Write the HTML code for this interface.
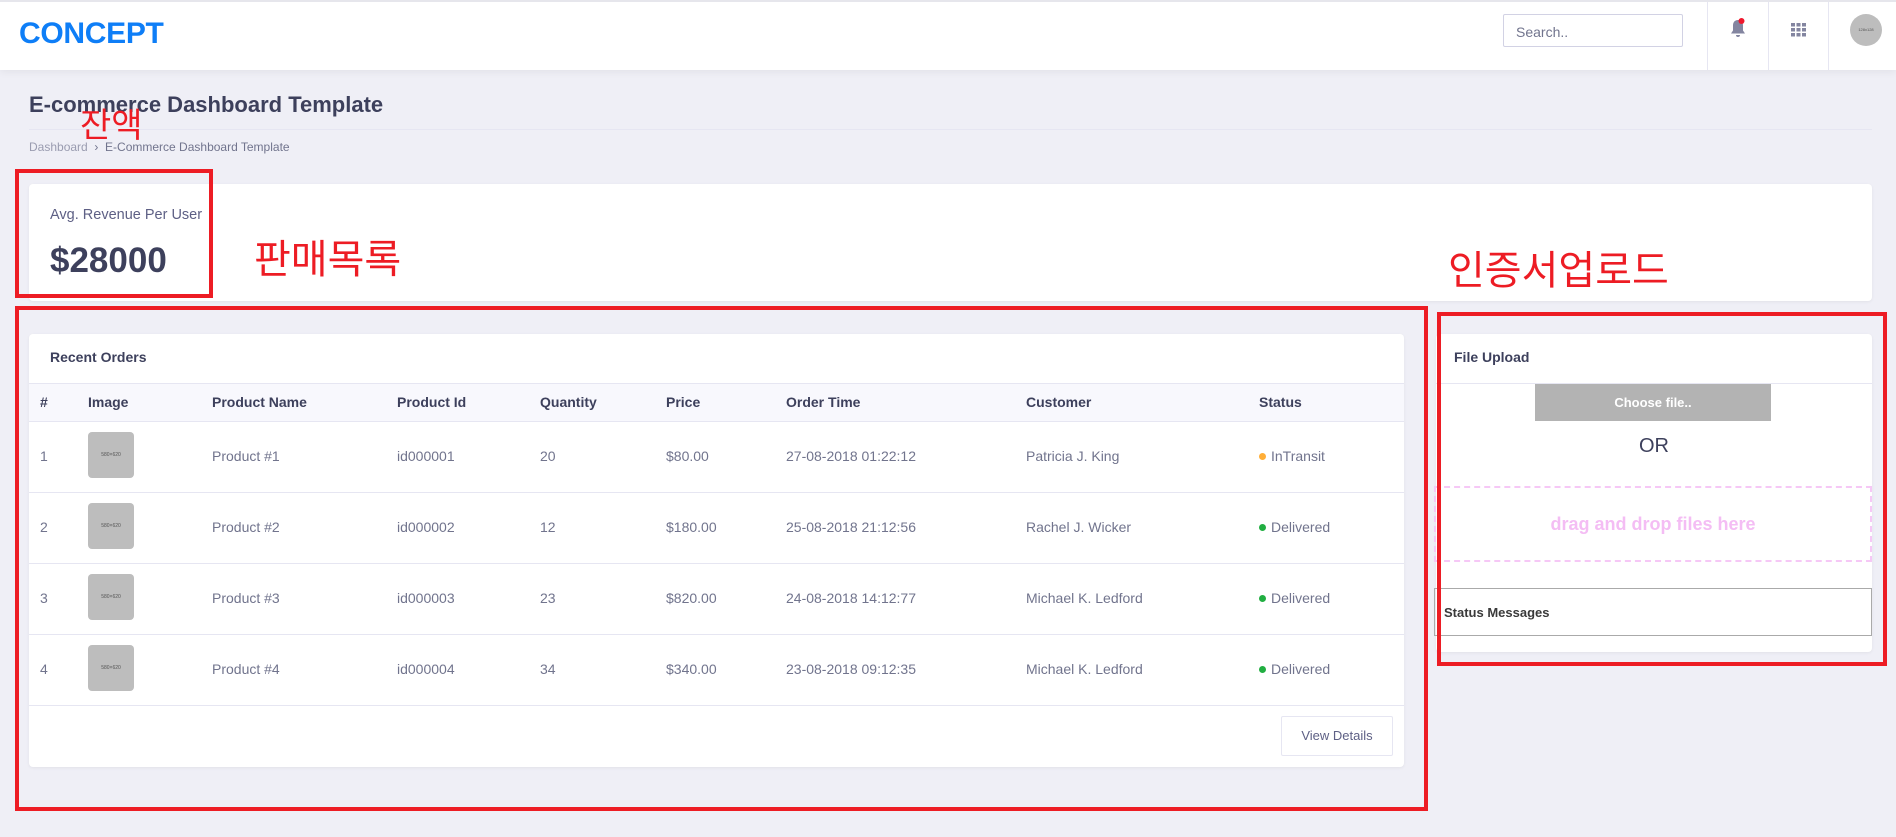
<!DOCTYPE html>
<html><head><meta charset="utf-8">
<style>
*{box-sizing:border-box;margin:0;padding:0}
body{width:1896px;height:837px;background:#efeff6;font-family:"Liberation Sans","Noto Sans CJK KR",sans-serif;position:relative;overflow:hidden;color:#71748d}
.a{position:absolute}
.hdr{left:0;top:0;width:1896px;height:70px;background:#fff;border-top:2px solid #e6e6ec;box-shadow:0 2px 8px rgba(0,0,0,.06)}
.logo{left:19px;top:17px;font-size:30px;font-weight:bold;color:#0e7ef7;letter-spacing:-0.3px}
.search{left:1503px;top:14px;width:180px;height:33px;border:1px solid #d2d2e4;border-radius:2px;font-size:14px;color:#71748d;padding:9px 12px}
.sep{top:2px;width:1px;height:68px;background:#e6e6f2}
.card{background:#fff;border-radius:4px;box-shadow:0 1px 3px rgba(0,0,0,.06)}
.red{border:4px solid #ed1c24}
.kr{color:#ed1c24;font-weight:normal;white-space:nowrap}
.th{font-size:14px;font-weight:bold;color:#3d405c}
.td{font-size:14px;color:#71748d}
.line{height:1px;background:#e6e6f2}
.thumb{width:46px;height:46px;background:#bdbdbd;border-radius:4px;font-size:5px;color:#555;text-align:center;line-height:46px}
.dot{display:inline-block;width:7px;height:7px;border-radius:50%;margin-right:5px;vertical-align:1px}
</style></head><body>
<div class="a hdr"></div>
<div class="a logo">CONCEPT</div>
<div class="a search">Search..</div>
<div class="a sep" style="left:1707px"></div>
<div class="a sep" style="left:1768px"></div>
<div class="a sep" style="left:1828px"></div>
<svg class="a" style="left:1729px;top:18px" width="18" height="22" viewBox="0 0 18 22"><path d="M9 2c-3.5 0-5 2.5-5 5.5v5l-2 3h14l-2-3v-5C14 4.5 12.5 2 9 2z M7 17a2 2 0 0 0 4 0z" fill="#8385a0"/><circle cx="12.5" cy="3" r="3" fill="#ef172c"/></svg>
<svg class="a" style="left:1791px;top:23px" width="15" height="14"><g fill="#8385a0"><rect x="0" y="0" width="4" height="3.5"/><rect x="5.5" y="0" width="4" height="3.5"/><rect x="11" y="0" width="4" height="3.5"/><rect x="0" y="5" width="4" height="3.5"/><rect x="5.5" y="5" width="4" height="3.5"/><rect x="11" y="5" width="4" height="3.5"/><rect x="0" y="10" width="4" height="3.5"/><rect x="5.5" y="10" width="4" height="3.5"/><rect x="11" y="10" width="4" height="3.5"/></g></svg>
<div class="a" style="left:1850px;top:14px;width:32px;height:32px;border-radius:50%;background:#bdbdbd;font-size:4px;color:#555;text-align:center;line-height:32px">128x128</div>

<div class="a" style="left:29px;top:92px;font-size:22px;color:#3d405c;font-weight:bold">E-commerce Dashboard Template</div>
<div class="a line" style="left:29px;top:129px;width:1843px"></div>
<div class="a" style="left:29px;top:140px;font-size:12px;color:#71748d"><span style="color:#9a9cb0">Dashboard</span> &nbsp;›&nbsp; E-Commerce Dashboard Template</div>
<div class="a kr" style="left:80px;top:98px;font-size:34px">잔액</div>

<div class="a card" style="left:29px;top:184px;width:1843px;height:117px"></div>
<div class="a" style="left:50px;top:207px;font-size:14.5px;color:#5e6085">Avg. Revenue Per User</div>
<div class="a" style="left:50px;top:241px;font-size:35px;color:#3d405c;font-weight:bold">$28000</div>
<div class="a red" style="left:15px;top:169px;width:198px;height:129px"></div>
<div class="a kr" style="left:254px;top:227px;font-size:40px">판매목록</div>
<div class="a kr" style="left:1448px;top:238px;font-size:40px">인증서업로드</div>

<div class="a card" style="left:29px;top:334px;width:1375px;height:433px"></div>
<div class="a th" style="left:50px;top:349px">Recent Orders</div>
<div class="a line" style="left:29px;top:383px;width:1375px"></div>
<div class="a" style="left:29px;top:384px;width:1375px;height:37px;background:#f8f8fd"></div>
<div class="a line" style="left:29px;top:421px;width:1375px"></div>
<div class="a th" style="left:40px;top:394px">#</div>
<div class="a th" style="left:88px;top:394px">Image</div>
<div class="a th" style="left:212px;top:394px">Product Name</div>
<div class="a th" style="left:397px;top:394px">Product Id</div>
<div class="a th" style="left:540px;top:394px">Quantity</div>
<div class="a th" style="left:666px;top:394px">Price</div>
<div class="a th" style="left:786px;top:394px">Order Time</div>
<div class="a th" style="left:1026px;top:394px">Customer</div>
<div class="a th" style="left:1259px;top:394px">Status</div>

<div class="a td" style="left:40px;top:448px">1</div><div class="a thumb" style="left:88px;top:432px">580×620</div><div class="a td" style="left:212px;top:448px">Product #1</div><div class="a td" style="left:397px;top:448px">id000001</div><div class="a td" style="left:540px;top:448px">20</div><div class="a td" style="left:666px;top:448px">$80.00</div><div class="a td" style="left:786px;top:448px">27-08-2018 01:22:12</div><div class="a td" style="left:1026px;top:448px">Patricia J. King</div><div class="a td" style="left:1259px;top:448px"><span class="dot" style="background:#ffae38"></span>InTransit</div>
<div class="a line" style="left:29px;top:492px;width:1375px"></div>
<div class="a td" style="left:40px;top:519px">2</div><div class="a thumb" style="left:88px;top:503px">580×620</div><div class="a td" style="left:212px;top:519px">Product #2</div><div class="a td" style="left:397px;top:519px">id000002</div><div class="a td" style="left:540px;top:519px">12</div><div class="a td" style="left:666px;top:519px">$180.00</div><div class="a td" style="left:786px;top:519px">25-08-2018 21:12:56</div><div class="a td" style="left:1026px;top:519px">Rachel J. Wicker</div><div class="a td" style="left:1259px;top:519px"><span class="dot" style="background:#21ae41"></span>Delivered</div>
<div class="a line" style="left:29px;top:563px;width:1375px"></div>
<div class="a td" style="left:40px;top:590px">3</div><div class="a thumb" style="left:88px;top:574px">580×620</div><div class="a td" style="left:212px;top:590px">Product #3</div><div class="a td" style="left:397px;top:590px">id000003</div><div class="a td" style="left:540px;top:590px">23</div><div class="a td" style="left:666px;top:590px">$820.00</div><div class="a td" style="left:786px;top:590px">24-08-2018 14:12:77</div><div class="a td" style="left:1026px;top:590px">Michael K. Ledford</div><div class="a td" style="left:1259px;top:590px"><span class="dot" style="background:#21ae41"></span>Delivered</div>
<div class="a line" style="left:29px;top:634px;width:1375px"></div>
<div class="a td" style="left:40px;top:661px">4</div><div class="a thumb" style="left:88px;top:645px">580×620</div><div class="a td" style="left:212px;top:661px">Product #4</div><div class="a td" style="left:397px;top:661px">id000004</div><div class="a td" style="left:540px;top:661px">34</div><div class="a td" style="left:666px;top:661px">$340.00</div><div class="a td" style="left:786px;top:661px">23-08-2018 09:12:35</div><div class="a td" style="left:1026px;top:661px">Michael K. Ledford</div><div class="a td" style="left:1259px;top:661px"><span class="dot" style="background:#21ae41"></span>Delivered</div>
<div class="a line" style="left:29px;top:705px;width:1375px"></div>
<div class="a" style="left:1281px;top:716px;width:112px;height:40px;border:1px solid #e6e6f2;border-radius:2px;font-size:13px;color:#5e6085;text-align:center;line-height:38px">View Details</div>
<div class="a red" style="left:15px;top:306px;width:1413px;height:505px"></div>

<div class="a card" style="left:1436px;top:334px;width:436px;height:318px"></div>
<div class="a th" style="left:1454px;top:349px">File Upload</div>
<div class="a line" style="left:1436px;top:383px;width:436px"></div>
<div class="a" style="left:1535px;top:384px;width:236px;height:37px;background:#b3b3b3;color:#fff;font-weight:bold;font-size:13px;text-align:center;line-height:37px">Choose file..</div>
<div class="a" style="left:1436px;top:435px;width:436px;text-align:center;font-size:20px;color:#3d405c">OR</div>
<div class="a" style="left:1434px;top:486px;width:438px;height:76px;border:2px dashed #f6c8f6;text-align:center;line-height:72px;font-size:18px;font-weight:bold;color:#f4bdf4">drag and drop files here</div>
<div class="a" style="left:1434px;top:588px;width:438px;height:48px;border:1px solid #aaa;font-size:13px;font-weight:bold;color:#3a3a3a;padding:16px 9px">Status Messages</div>
<div class="a red" style="left:1437px;top:312px;width:450px;height:354px"></div>
</body></html>
